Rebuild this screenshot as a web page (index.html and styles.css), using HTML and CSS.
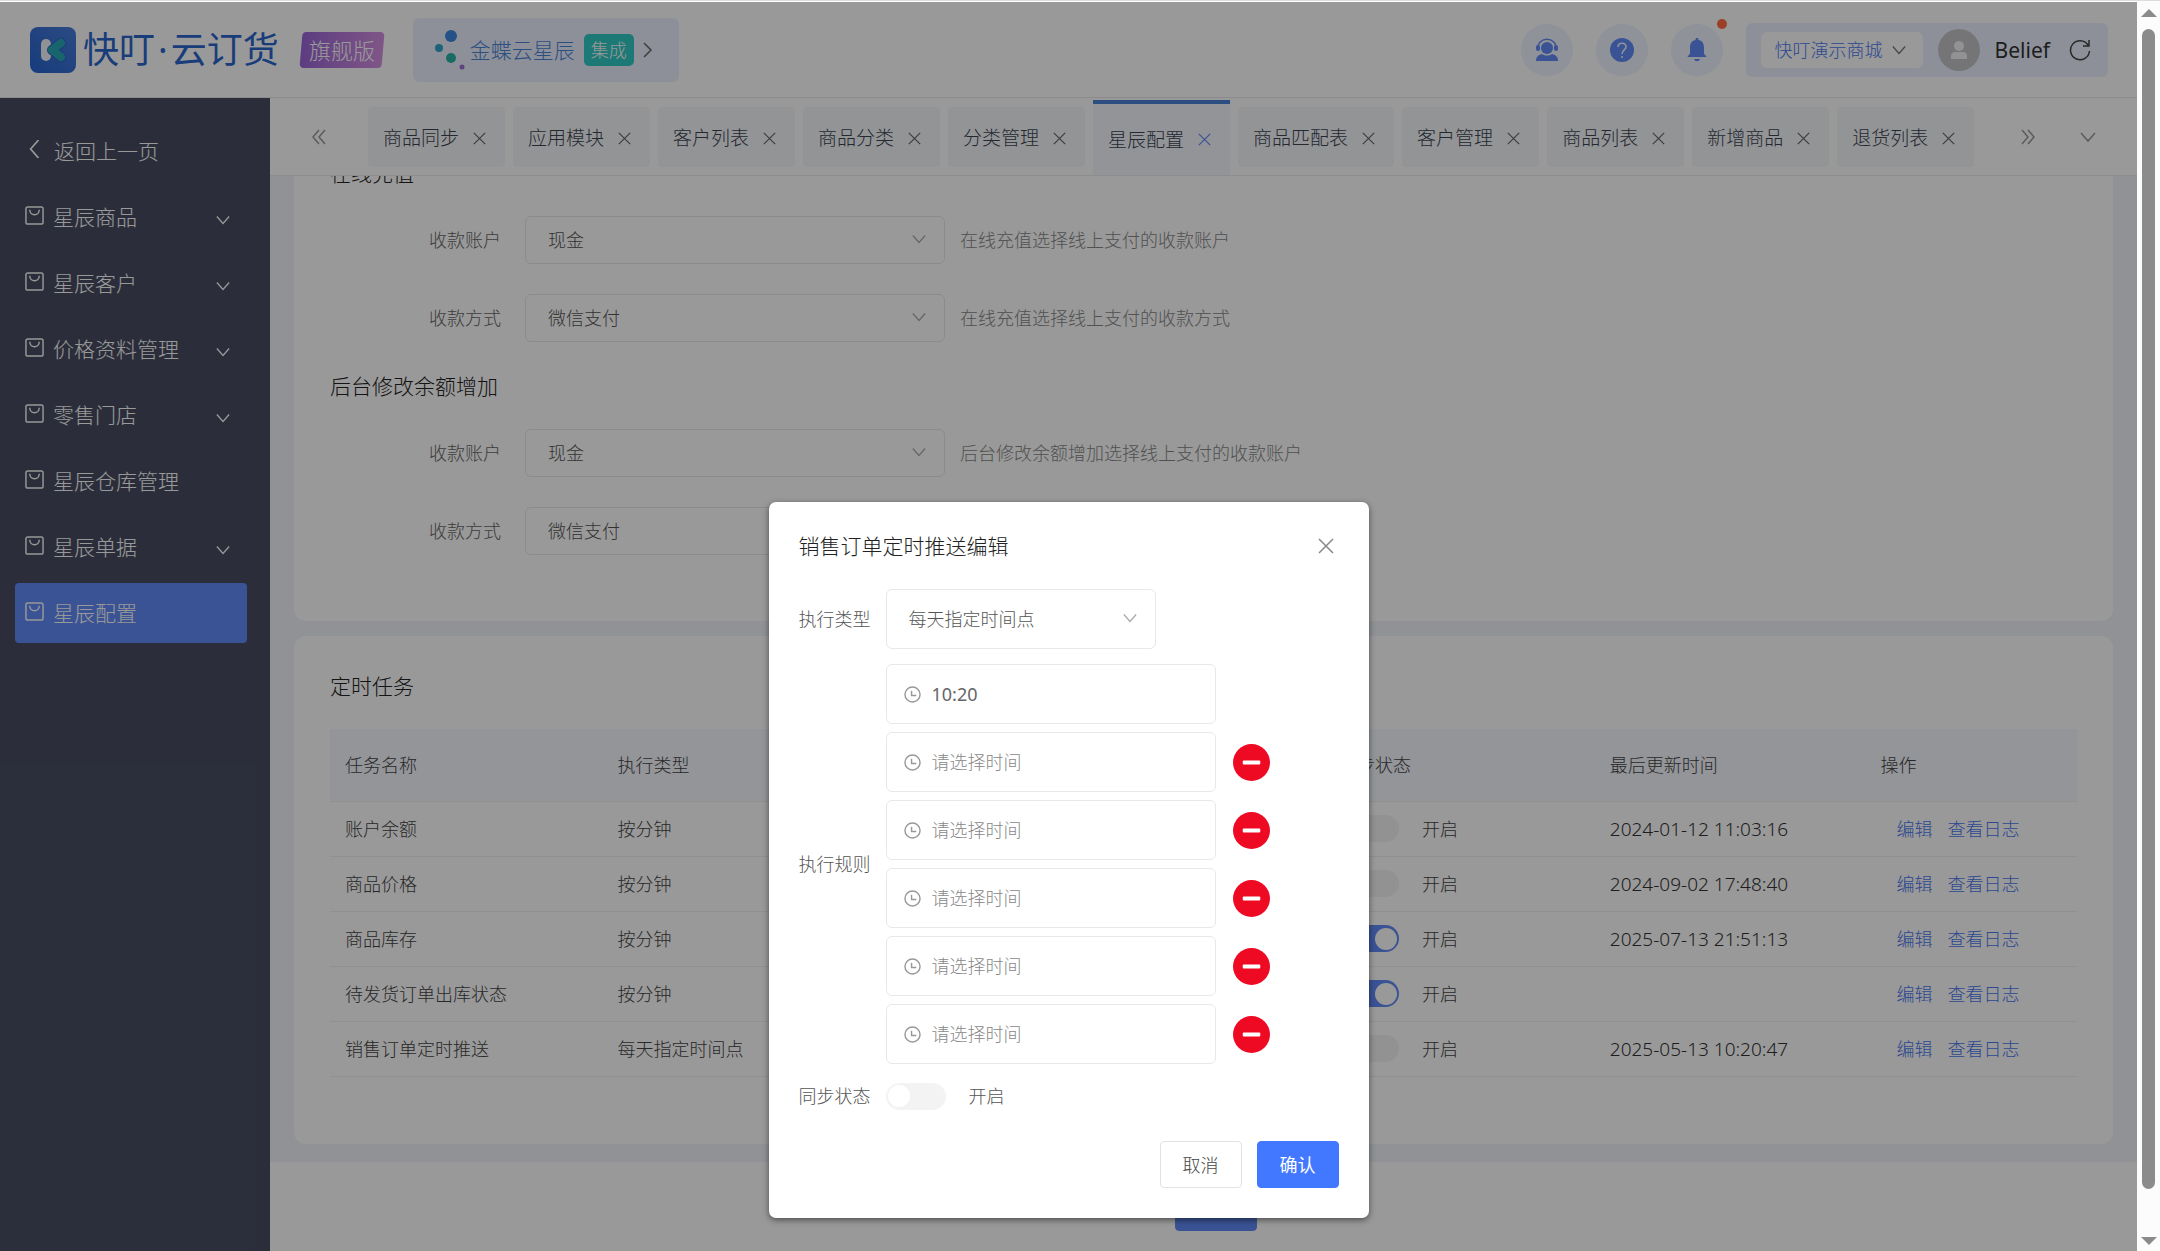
FILE: index.html
```html
<!DOCTYPE html>
<html lang="zh-CN">
<head>
	<meta charset="UTF-8">
	<title>快叮·云订货</title>
	<link rel="stylesheet" href="styles.css">
</head>
<body>
	<svg class="sprite" aria-hidden="true">
		<symbol id="i-down" viewBox="0 0 16 16"><path d="M1 4l7 8 7-8"/></symbol>
		<symbol id="i-right" viewBox="0 0 16 16"><path d="M5 1l7 7-7 7"/></symbol>
		<symbol id="i-left" viewBox="0 0 16 16"><path d="M12 0L5 8l7 8"/></symbol>
		<symbol id="i-dleft" viewBox="0 0 16 16"><path d="M8 1L2 8l6 7M14 1L8 8l6 7"/></symbol>
		<symbol id="i-dright" viewBox="0 0 16 16"><path d="M2 1l6 7-6 7M8 1l6 7-6 7"/></symbol>
		<symbol id="i-close" viewBox="0 0 16 16"><path d="M1 1l14 14M15 1L1 15"/></symbol>
		<symbol id="i-bag" viewBox="0 0 20 20"><rect x="1" y="1" width="18" height="18" rx="2"/><path d="M5 4c0 7 10 7 10 0"/></symbol>
		<symbol id="i-clock" viewBox="0 0 18 18"><circle cx="9" cy="9" r="8"/><path d="M8 5v5h5"/></symbol>
		<symbol id="i-minus" viewBox="0 0 38 38"><circle cx="19" cy="19" r="19"/><rect x="10" y="17" width="18" height="4" rx="1" fill="#fff"/></symbol>
	</svg>

	<div class="app">
		<header class="header">
			<div class="logo">
				<svg class="logo-mark" viewBox="0 0 46 46">
					<defs>
						<linearGradient id="g-logo" x1="0" y1="1" x2="1" y2="0">
							<stop offset="0" stop-color="#2663cf"/>
							<stop offset="1" stop-color="#4a7ddb"/>
						</linearGradient>
					</defs>
					<rect width="46" height="46" rx="8" fill="url(#g-logo)"/>
					<rect x="11" y="12" width="10" height="22" rx="5" fill="#f2f4fa"/>
					<path d="M31 16L22 23l9 7" fill="none" stroke="#2c66cc" stroke-width="10" stroke-linecap="round" stroke-linejoin="round"/>
					<path d="M31 16L22 23l9 7" fill="none" stroke="#2ba8b6" stroke-width="8" stroke-linecap="round" stroke-linejoin="round"/>
				</svg>
				<span class="logo-text">快叮<i>·</i>云订货</span>
				<span class="edition"><b>旗舰版</b></span>
			</div>
			<a class="integration" href="#">
				<svg class="dots" viewBox="0 0 30 42">
					<circle cx="16" cy="7" r="6" fill="#3d89df"/>
					<circle cx="4" cy="19" r="4" fill="#2fa6ca"/>
					<circle cx="16" cy="29" r="5" fill="#28b3a4"/>
					<circle cx="27" cy="38" r="2.500" fill="#a06fd8"/>
				</svg>
				<span>金蝶云星辰</span>
				<em>集成</em>
				<svg class="icon"><use href="#i-right"/></svg>
			</a>
			<div class="tools">
				<button class="round" aria-label="客服">
					<svg viewBox="0 0 24 24"><circle cx="12" cy="10" r="6"/><path d="M1 23c0-4 2-6 6-7 3 2 7 2 10 0 4 1 6 3 6 7z"/><path d="M3 11C2 -2 22 -2 21 11" fill="none" stroke="#618af7" stroke-width="1.500"/><rect x="1" y="7" width="4" height="6" rx="2"/><rect x="19" y="7" width="4" height="6" rx="2"/></svg>
				</button>
				<button class="round" aria-label="帮助">
					<svg viewBox="0 0 24 24"><circle cx="12" cy="12" r="12"/><path d="M8 9c0-5 8-5 8 0 0 3-4 3-4 7M12 18v2" fill="none" stroke="#eef3ff" stroke-width="1.600"/></svg>
				</button>
				<button class="round has-dot" aria-label="通知">
					<svg viewBox="0 0 24 24"><path d="M12 0c1 0 1.500.5 1.500 2C18 3 19 6 19 10v5c0 2 2 2 2.500 4h-19C3 17 5 17 5 15v-5c0-4 1-7 5.500-8C10.500.5 11 0 12 0zM9 21h6c-1 3-5 3-6 0z"/></svg>
				</button>
				<div class="user">
					<button class="shop">快叮演示商城<svg class="icon"><use href="#i-down"/></svg></button>
					<svg class="avatar" viewBox="0 0 42 42"><circle cx="21" cy="21" r="21" fill="#c3c4c7"/><circle cx="21" cy="17" r="5" fill="#f4f4f6"/><path d="M13 30v-3c0-3 2-4 4-4h8c2 0 4 1 4 4v3z" fill="#f4f4f6"/></svg>
					<span class="name">Belief</span>
					<button class="plain" aria-label="刷新">
						<svg class="refresh" viewBox="0 0 22 22"><path d="M19 6A9.500 9.500 0 1 0 20.500 12M20 1v6h-6"/></svg>
					</button>
				</div>
			</div>
		</header>

		<div class="body">
			<nav class="sidebar">
				<a class="back" href="#"><svg class="icon"><use href="#i-left"/></svg>返回上一页</a>
				<a href="#"><svg class="bag"><use href="#i-bag"/></svg><span>星辰商品</span><svg class="icon"><use href="#i-down"/></svg></a>
				<a href="#"><svg class="bag"><use href="#i-bag"/></svg><span>星辰客户</span><svg class="icon"><use href="#i-down"/></svg></a>
				<a href="#"><svg class="bag"><use href="#i-bag"/></svg><span>价格资料管理</span><svg class="icon"><use href="#i-down"/></svg></a>
				<a href="#"><svg class="bag"><use href="#i-bag"/></svg><span>零售门店</span><svg class="icon"><use href="#i-down"/></svg></a>
				<a href="#"><svg class="bag"><use href="#i-bag"/></svg><span>星辰仓库管理</span></a>
				<a href="#"><svg class="bag"><use href="#i-bag"/></svg><span>星辰单据</span><svg class="icon"><use href="#i-down"/></svg></a>
				<a class="active" href="#"><svg class="bag"><use href="#i-bag"/></svg><span>星辰配置</span></a>
			</nav>

			<main class="main">
				<div class="tabs">
					<button class="plain prev" aria-label="向左"><svg class="icon"><use href="#i-dleft"/></svg></button>
					<div class="tab-list">
						<a class="tab" href="#">商品同步<svg><use href="#i-close"/></svg></a>
						<a class="tab" href="#">应用模块<svg><use href="#i-close"/></svg></a>
						<a class="tab" href="#">客户列表<svg><use href="#i-close"/></svg></a>
						<a class="tab" href="#">商品分类<svg><use href="#i-close"/></svg></a>
						<a class="tab" href="#">分类管理<svg><use href="#i-close"/></svg></a>
						<a class="tab current" href="#">星辰配置<svg><use href="#i-close"/></svg></a>
						<a class="tab" href="#">商品匹配表<svg><use href="#i-close"/></svg></a>
						<a class="tab" href="#">客户管理<svg><use href="#i-close"/></svg></a>
						<a class="tab" href="#">商品列表<svg><use href="#i-close"/></svg></a>
						<a class="tab" href="#">新增商品<svg><use href="#i-close"/></svg></a>
						<a class="tab" href="#">退货列表<svg><use href="#i-close"/></svg></a>
					</div>
					<button class="plain next" aria-label="向右"><svg class="icon"><use href="#i-dright"/></svg></button>
					<button class="plain more" aria-label="更多"><svg class="icon"><use href="#i-down"/></svg></button>
				</div>

				<div class="content">
					<section class="card settings">
						<h2 class="first">在线充值</h2>
						<div class="row">
							<label for="acc1">收款账户</label>
							<div class="select"><select id="acc1"><option>现金</option></select><svg class="icon"><use href="#i-down"/></svg></div>
							<span class="hint">在线充值选择线上支付的收款账户</span>
						</div>
						<div class="row">
							<label for="way1">收款方式</label>
							<div class="select"><select id="way1"><option>微信支付</option></select><svg class="icon"><use href="#i-down"/></svg></div>
							<span class="hint">在线充值选择线上支付的收款方式</span>
						</div>
						<h2>后台修改余额增加</h2>
						<div class="row">
							<label for="acc2">收款账户</label>
							<div class="select"><select id="acc2"><option>现金</option></select><svg class="icon"><use href="#i-down"/></svg></div>
							<span class="hint">后台修改余额增加选择线上支付的收款账户</span>
						</div>
						<div class="row">
							<label for="way2">收款方式</label>
							<div class="select"><select id="way2"><option>微信支付</option></select><svg class="icon"><use href="#i-down"/></svg></div>
						</div>
					</section>

					<section class="card tasks">
						<h2>定时任务</h2>
						<table>
							<thead>
								<tr><th class="c-name">任务名称</th><th class="c-type">执行类型</th><th class="c-rule">执行规则</th><th class="c-state">同步状态</th><th class="c-time">最后更新时间</th><th>操作</th></tr>
							</thead>
							<tbody>
								<tr>
									<td>账户余额</td><td>按分钟</td><td></td>
									<td><label class="toggle"><input type="checkbox">开启</label></td>
									<td class="date">2024-01-12 11:03:16</td>
									<td class="ops"><a href="#">编辑</a><a href="#">查看日志</a></td>
								</tr>
								<tr>
									<td>商品价格</td><td>按分钟</td><td></td>
									<td><label class="toggle"><input type="checkbox">开启</label></td>
									<td class="date">2024-09-02 17:48:40</td>
									<td class="ops"><a href="#">编辑</a><a href="#">查看日志</a></td>
								</tr>
								<tr>
									<td>商品库存</td><td>按分钟</td><td></td>
									<td><label class="toggle"><input type="checkbox" checked>开启</label></td>
									<td class="date">2025-07-13 21:51:13</td>
									<td class="ops"><a href="#">编辑</a><a href="#">查看日志</a></td>
								</tr>
								<tr>
									<td>待发货订单出库状态</td><td>按分钟</td><td></td>
									<td><label class="toggle"><input type="checkbox" checked>开启</label></td>
									<td></td>
									<td class="ops"><a href="#">编辑</a><a href="#">查看日志</a></td>
								</tr>
								<tr>
									<td>销售订单定时推送</td><td>每天指定时间点</td><td></td>
									<td><label class="toggle"><input type="checkbox">开启</label></td>
									<td class="date">2025-05-13 10:20:47</td>
									<td class="ops"><a href="#">编辑</a><a href="#">查看日志</a></td>
								</tr>
							</tbody>
						</table>
					</section>
				</div>
				<footer class="footer"><button class="btn primary">保存</button></footer>
			</main>
		</div>

		<div class="overlay">
			<div class="dialog" role="dialog" aria-labelledby="dialog-title">
				<div class="dialog-head">
					<h2 id="dialog-title">销售订单定时推送编辑</h2>
					<button class="plain" aria-label="关闭"><svg class="icon"><use href="#i-close"/></svg></button>
				</div>
				<div class="field">
					<label for="type">执行类型</label>
					<div class="select"><select id="type"><option>每天指定时间点</option></select><svg class="icon"><use href="#i-down"/></svg></div>
				</div>
				<div class="field">
					<label for="time1">执行规则</label>
					<div class="times">
						<div class="time"><div class="time-box"><svg><use href="#i-clock"/></svg><input id="time1" type="text" value="10:20"></div></div>
						<div class="time"><div class="time-box"><svg><use href="#i-clock"/></svg><input type="text" placeholder="请选择时间" aria-label="时间2"></div><button class="plain" aria-label="删除"><svg class="minus"><use href="#i-minus"/></svg></button></div>
						<div class="time"><div class="time-box"><svg><use href="#i-clock"/></svg><input type="text" placeholder="请选择时间" aria-label="时间3"></div><button class="plain" aria-label="删除"><svg class="minus"><use href="#i-minus"/></svg></button></div>
						<div class="time"><div class="time-box"><svg><use href="#i-clock"/></svg><input type="text" placeholder="请选择时间" aria-label="时间4"></div><button class="plain" aria-label="删除"><svg class="minus"><use href="#i-minus"/></svg></button></div>
						<div class="time"><div class="time-box"><svg><use href="#i-clock"/></svg><input type="text" placeholder="请选择时间" aria-label="时间5"></div><button class="plain" aria-label="删除"><svg class="minus"><use href="#i-minus"/></svg></button></div>
						<div class="time"><div class="time-box"><svg><use href="#i-clock"/></svg><input type="text" placeholder="请选择时间" aria-label="时间6"></div><button class="plain" aria-label="删除"><svg class="minus"><use href="#i-minus"/></svg></button></div>
					</div>
				</div>
				<div class="field">
					<label for="sync">同步状态</label>
					<label class="toggle"><input id="sync" type="checkbox">开启</label>
				</div>
				<div class="actions">
					<button class="btn">取消</button>
					<button class="btn primary">确认</button>
				</div>
			</div>
		</div>
	</div>

	<div class="scrollbar" aria-hidden="true">
		<i class="arrow up"></i>
		<i class="thumb"></i>
		<i class="arrow down"></i>
	</div>
</body>
</html>
```
FILE: styles.css
```css
* {
	box-sizing: border-box;
}

body {
	margin: 0;
	height: 100vh;
	display: flex;
	overflow: hidden;
	border-top: 1px solid #dcdcdc;
	background: #fff;
	color: #444;
	font-family: "Noto Sans", "Noto Sans CJK SC", sans-serif;
	font-size: 18px;
	font-weight: 300;
	line-height: 28px;
}

button, input, select {
	font: inherit;
	color: inherit;
}

button {
	cursor: pointer;
}

a {
	color: inherit;
	text-decoration: none;
}

h2 {
	margin: 0;
	font-size: 21px;
	font-weight: 300;
	color: #222;
}

i, em {
	font-style: normal;
}

.sprite {
	position: absolute;
	width: 0;
	height: 0;
}

.icon {
	width: 16px;
	height: 16px;
	flex: none;
	fill: none;
	stroke: currentColor;
	stroke-width: 1.5;
}

.plain {
	display: flex;
	padding: 0;
	border: 0;
	background: none;
}

.app {
	position: relative;
	flex: 1;
	min-width: 0;
	margin-top: 1px;
	display: flex;
	flex-direction: column;
}

/* header */
.header {
	display: flex;
	align-items: center;
	height: 96px;
	padding: 0 29px 0 30px;
	border-bottom: 1px solid #e8e8e8;
	flex: none;
}

.logo {
	display: flex;
	align-items: center;
}

.logo-mark {
	width: 46px;
	height: 46px;
	margin-right: 7px;
}

.logo-text {
	color: #2a66cb;
	font-size: 36px;
	font-weight: 400;
	line-height: 46px;
}

.logo-text i {
	margin: 0 3px;
}

.edition {
	margin-left: 22px;
	padding: 4px 8px;
	border-radius: 4px;
	background: linear-gradient(90deg, #9a66d8, #d48fe0);
	color: #fff;
	font-size: 22px;
	transform: skewX(-5deg);
}

.edition b {
	display: block;
	font-weight: 300;
	transform: skewX(5deg);
}

.integration {
	display: flex;
	align-items: center;
	height: 64px;
	margin-left: 30px;
	padding: 0 24px 0 22px;
	border-radius: 6px;
	background: #ecf1ff;
	color: #4a84d8;
	font-size: 21px;
}

.integration em {
	margin: 0 5px 0 9px;
	padding: 2px 7px;
	border-radius: 5px;
	background: #2fcac4;
	color: #fff;
	font-size: 18px;
}

.integration .icon {
	color: #666;
}

.dots {
	width: 30px;
	height: 42px;
	margin-right: 5px;
}

.tools {
	display: flex;
	align-items: center;
	gap: 23px;
	margin-left: auto;
}

.round {
	position: relative;
	display: flex;
	align-items: center;
	justify-content: center;
	width: 52px;
	height: 52px;
	padding: 0;
	border: 0;
	border-radius: 50%;
	background: #eef3ff;
}

.round svg {
	width: 24px;
	height: 24px;
	fill: #618af7;
}

.has-dot::after {
	content: "";
	position: absolute;
	top: -5px;
	right: -4px;
	width: 10px;
	height: 10px;
	border-radius: 50%;
	background: #ff6b42;
}

.user {
	display: flex;
	align-items: center;
	height: 54px;
	padding: 0 17px 0 15px;
	border-radius: 6px;
	background: #ecf1ff;
}

.shop {
	display: flex;
	align-items: center;
	gap: 9px;
	height: 36px;
	padding: 0 17px 0 14px;
	border: 0;
	border-radius: 6px;
	background: #fff;
	color: #4a78f0;
}

.shop .icon {
	width: 14px;
	height: 14px;
	color: #777;
}

.avatar {
	width: 42px;
	height: 42px;
	margin-left: 15px;
}

.name {
	margin: 0 19px 0 15px;
	color: #333;
	font-size: 21px;
	font-weight: 400;
}

.refresh {
	width: 22px;
	height: 22px;
	fill: none;
	stroke: #444;
	stroke-width: 1.5;
}

/* side menu */
.body {
	display: flex;
	flex: 1;
	min-height: 0;
}

.sidebar {
	width: 270px;
	flex: none;
	padding: 23px 23px 0 15px;
	background: #484e62;
	color: #fff;
	font-size: 21px;
}

.sidebar a {
	display: flex;
	align-items: center;
	height: 60px;
	margin-bottom: 6px;
	padding: 0 16px 0 10px;
	border-radius: 4px;
}

.sidebar .icon {
	width: 14px;
	height: 14px;
	margin: 5px 1px 0 auto;
}

.sidebar .back .icon {
	width: 18px;
	height: 18px;
	margin: 0 11px 4px 0;
}

.sidebar .active {
	background: #618af7;
}

.bag {
	width: 19px;
	height: 19px;
	margin: 0 9px 4px 0;
	fill: none;
	stroke: currentColor;
	stroke-width: 1.5;
}

/* page tabs */
.main {
	flex: 1;
	min-width: 0;
	display: flex;
	flex-direction: column;
}

.tabs {
	display: flex;
	align-items: center;
	height: 78px;
	padding: 0 41px;
	border-bottom: 1px solid #ececec;
	color: #999;
	flex: none;
}

.tab-list {
	display: flex;
	align-items: center;
	gap: 8px;
	height: 100%;
	margin: 0 auto 0 41px;
}

.next {
	margin-right: 44px;
}

.tab {
	display: flex;
	align-items: center;
	gap: 14px;
	height: 60px;
	padding: 3px 19px 0 15px;
	border-radius: 4px;
	background: #f5f7fa;
	color: #3c4352;
	font-size: 19px;
}

.tab svg {
	width: 13px;
	height: 13px;
	fill: none;
	stroke: #666;
	stroke-width: 1.5;
}

.tab.current {
	height: 75px;
	align-self: flex-end;
	padding-top: 0;
	border-top: 4px solid #4a83d8;
	border-radius: 0;
	background: #f4f7fc;
}

.tab.current svg {
	stroke: #618af7;
}

/* content */
.content {
	padding: 0 24px 18px;
	overflow: hidden;
	background: #f0f4fa;
	flex: none;
}

.card {
	padding: 0 36px;
	border-radius: 12px;
	background: #fff;
}

.settings {
	padding-bottom: 36px;
	border-top-left-radius: 0;
	border-top-right-radius: 0;
}

.settings h2 {
	margin-bottom: 29px;
}

.settings .first {
	margin-top: -17px;
}

.row {
	display: flex;
	align-items: center;
	gap: 15px;
	margin-bottom: 30px;
}

.row label {
	width: 180px;
	padding-right: 9px;
	text-align: right;
	color: #666;
}

.select {
	position: relative;
	width: 420px;
	height: 48px;
}

.select select {
	width: 100%;
	height: 100%;
	padding: 0 22px;
	border: 1px solid #e8e8e8;
	border-radius: 6px;
	background: #fff;
	appearance: none;
	color: #555;
}

.select .icon {
	position: absolute;
	top: 50%;
	right: 19px;
	margin-top: -8px;
	width: 14px;
	height: 14px;
	color: #aaa;
	pointer-events: none;
}

.hint {
	color: #888;
}

.tasks {
	margin-top: 15px;
	padding-top: 36px;
	padding-bottom: 67px;
}

table {
	width: 100%;
	margin-top: 29px;
	border-collapse: collapse;
	table-layout: fixed;
}

th, td {
	height: 55px;
	padding: 0 15px;
	border-bottom: 1px solid #f0f0f0;
	text-align: left;
	font-weight: 300;
}

th {
	height: 72px;
	background: #f6f8ff;
}

.c-name {
	width: 15.6%;
}

.c-type {
	width: 15.5%;
}

.c-rule {
	width: 25.8%;
}

.c-state {
	width: 15.5%;
}

.c-time {
	width: 15.5%;
}

.date {
	color: #333;
	font-size: 19px;
}

.ops {
	padding-left: 31px;
	color: #4a78f0;
}

.ops a + a {
	margin-left: 15px;
}

.toggle {
	display: flex;
	align-items: center;
	gap: 23px;
}

.toggle input {
	display: flex;
	align-items: center;
	width: 60px;
	height: 27px;
	margin: 0;
	padding: 0 2px;
	border-radius: 14px;
	background: #f3f3f3;
	appearance: none;
}

.toggle input::before {
	content: "";
	width: 22px;
	height: 22px;
	border-radius: 50%;
	background: #fff;
}

.toggle input:checked {
	justify-content: flex-end;
	background: #618af7;
}

.footer {
	padding: 22px 0 0 24px;
	text-align: center;
}

.btn {
	height: 47px;
	padding: 0 22px;
	border: 1px solid #e2e2e2;
	border-radius: 4px;
	background: #fff;
}

.btn.primary {
	border-color: #4277ff;
	background: #4277ff;
	color: #fff;
	font-weight: 400;
}

.footer .btn.primary {
	border-color: #618af7;
	background: #618af7;
}

/* dialog */
.overlay {
	position: absolute;
	inset: 0;
	padding-top: 40vh;
	background: rgba(0, 0, 0, 0.4);
}

.dialog {
	width: 600px;
	margin: 0 auto;
	padding: 30px;
	border-radius: 7px;
	background: #fff;
	box-shadow: 0 2px 6px rgba(0, 0, 0, 0.5);
}

.dialog-head {
	display: flex;
	align-items: center;
	justify-content: space-between;
	padding-right: 5px;
	margin-bottom: 29px;
}

.dialog-head .icon {
	color: #888;
}

.field {
	display: flex;
	align-items: center;
	gap: 15px;
	margin-bottom: 15px;
	color: #555;
}

.field .select {
	width: 270px;
	height: 60px;
}

.field .toggle {
	height: 34px;
}

.times {
	display: flex;
	flex-direction: column;
	gap: 8px;
}

.time {
	display: flex;
	align-items: center;
	gap: 17px;
}

.time-box {
	display: flex;
	align-items: center;
	gap: 11px;
	width: 330px;
	height: 60px;
	padding: 0 17px;
	border: 1px solid #e8e8e8;
	border-radius: 6px;
}

.time-box svg {
	width: 17px;
	height: 17px;
	flex: none;
	fill: none;
	stroke: #999;
	stroke-width: 1.5;
}

.time-box input {
	width: 100%;
	min-width: 0;
	padding: 0;
	border: 0;
	outline: 0;
	background: none;
	font-weight: 400;
	color: #666;
}

.time-box input::placeholder {
	color: #888;
	font-weight: 300;
}

.minus {
	width: 37px;
	height: 37px;
	fill: #ef0a24;
}

.actions {
	display: flex;
	justify-content: flex-end;
	gap: 15px;
	margin-top: 28px;
}

/* scrollbar */
.scrollbar {
	display: flex;
	flex-direction: column;
	align-items: center;
	justify-content: space-between;
	width: 23px;
	padding: 8px 0 6px;
	background: #fcfcfc;
}

.thumb {
	flex: 1;
	width: 13px;
	margin: 12px 0 48px;
	border-radius: 7px;
	background: #8b8b8b;
}

.arrow {
	border: 8px solid transparent;
	border-top-width: 0;
	border-bottom-color: #8b8b8b;
}

.down {
	border-top: 8px solid #8b8b8b;
	border-bottom-width: 0;
}
```
